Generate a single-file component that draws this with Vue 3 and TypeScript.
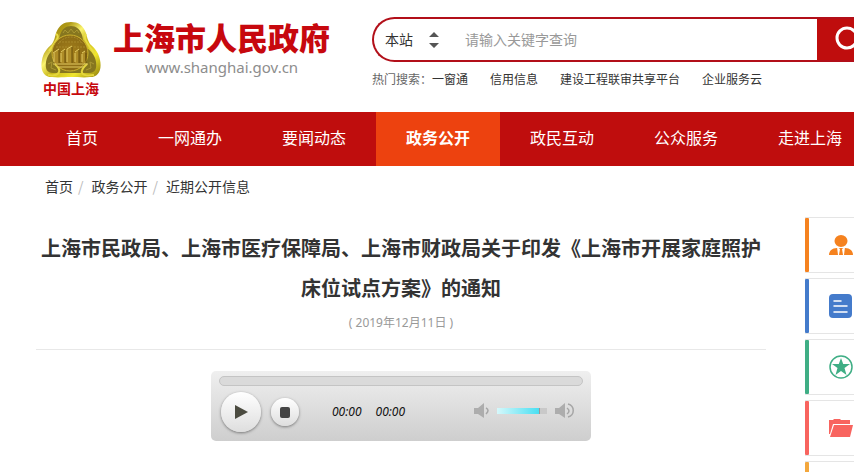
<script setup lang="ts">
import { ref } from 'vue'

interface NavItem {
  label: string
  active?: boolean
}

const scope = ref('本站')
const keyword = ref('')
const volume = ref(85)
const hotWords: string[] = ['一窗通', '信用信息', '建设工程联审共享平台', '企业服务云']
const navItems: NavItem[] = [
  { label: '首页' },
  { label: '一网通办' },
  { label: '要闻动态' },
  { label: '政务公开', active: true },
  { label: '政民互动' },
  { label: '公众服务' },
  { label: '走进上海' },
]
const crumbs: string[] = ['首页', '政务公开', '近期公开信息']
</script>

<template>
  <div class="page">
    <header class="header">
      <a class="brand" href="#">
        <span class="emblem">
          <svg width="60" height="56" viewBox="0 0 60 56" aria-hidden="true">
            <defs>
              <linearGradient id="gold" x1="0" y1="0" x2="1" y2="1">
                <stop offset="0" stop-color="#8a7610" />
                <stop offset="0.25" stop-color="#b09a16" />
                <stop offset="0.4" stop-color="#fbf470" />
                <stop offset="0.55" stop-color="#c9b71c" />
                <stop offset="0.75" stop-color="#f0e62e" />
                <stop offset="1" stop-color="#8c7a0a" />
              </linearGradient>
              <radialGradient id="disc">
                <stop offset="0" stop-color="#a5801c" />
                <stop offset="1" stop-color="#8a6a14" />
              </radialGradient>
            </defs>
            <path d="M15 11C18 3 23 0 30 0C37 0 42 3 45 11C46 15 47 19 49 22C55 27 58 32 59 38C61 47 58 55 49 55C43 56 37 55 30 55C23 55 17 56 11 55C2 55-1 47 1 38C2 32 5 27 11 22C13 19 14 15 15 11Z" fill="url(#gold)" />
            <path d="M19 13C21 7 25 4 30 4C35 4 39 7 41 13C42 18 43 22 46 26C51 30 54 34 55 40C56 47 54 51 48 51H12C6 51 4 47 5 40C6 34 9 30 14 26C17 22 18 18 19 13Z" fill="#86761f" />
            <path d="M22 11L24 8L27 11L30 7L33 11L36 8L38 11M7 42L11 40L10 46L15 48M53 42L49 40L50 46L45 48" fill="none" stroke="#aa9833" />
            <path d="M15 12C20 14 13 22 8 29M45 12C41 17 49 24 53 31" fill="none" stroke="#e9dc45" stroke-width="2" />
            <path d="M7 53C18 55 22 49 14 42M53 53C40 55 37 50 46 42" fill="none" stroke="#e4d63c" stroke-width="2" />
            <circle cx="29" cy="31" r="18" fill="url(#disc)" stroke="#cdb22f" />
            <path d="M17 22C21 17 25 15 30 15C35 15 39 18 42 22M15 25H44M18 20H40" fill="none" stroke="#a88a2a" stroke-dasharray="2 1" />
            <path d="M13 30L18 27V41H13ZM20 31L24 27V41H20ZM26 27L31 24V41H26ZM34 30L38 27V41H34ZM41 31L44 29V41H41Z" fill="#ae8c27" />
            <path d="M12 31L18 27M20 30L24 27M26 27L31 24M34 30L38 27M41 31L44 29M13 31V40M20 31V40M26 27V40M34 31V40M41 32V40M12 42H47M16 45H43" fill="none" stroke="#e2cb62" />
            <path d="M18 28V41M24 28V41M31 25V41M38 28V41M45 31V41" fill="none" stroke="#694e0a" />
          </svg>
          <span class="emblem-name">中国上海</span>
        </span>
        <span class="brand-text">
          <strong class="brand-title">上海市人民政府</strong>
          <span class="brand-url">www.shanghai.gov.cn</span>
        </span>
      </a>
      <div class="search-area">
        <form class="search" role="search" @submit.prevent>
          <div class="scope">
            <select v-model="scope" aria-label="搜索范围">
              <option>本站</option>
            </select>
            <svg width="10" height="18" viewBox="0 0 10 18" aria-hidden="true">
              <path d="M5 1L10 6H0ZM5 17L0 12H10Z" fill="#555" />
            </svg>
          </div>
          <input v-model="keyword" type="text" placeholder="请输入关键字查询" aria-label="关键字">
          <button type="submit" aria-label="搜索">
            <svg width="30" height="30" viewBox="0 0 30 30" aria-hidden="true">
              <circle cx="12" cy="13" r="10" fill="none" stroke="#fff" stroke-width="3" />
              <path d="M19 20L27 28" stroke="#fff" stroke-width="3" />
            </svg>
          </button>
        </form>
        <div class="hot">
          <span class="hot-label">热门搜索：</span>
          <a v-for="word in hotWords" :key="word" href="#">{{ word }}</a>
        </div>
      </div>
    </header>

    <nav class="nav">
      <a v-for="item in navItems" :key="item.label" href="#" :class="{ active: item.active }">{{ item.label }}</a>
    </nav>

    <div class="content">
      <main class="main">
        <ol class="crumbs">
          <li v-for="crumb in crumbs" :key="crumb"><a href="#">{{ crumb }}</a></li>
        </ol>
        <article>
          <h1>上海市民政局、上海市医疗保障局、上海市财政局关于印发《上海市开展家庭照护床位试点方案》的通知</h1>
          <p class="date">( 2019年12月11日 )</p>
          <div class="player">
            <div class="progress" role="progressbar" aria-label="播放进度" aria-valuenow="0"></div>
            <div class="controls">
              <button class="play" type="button" aria-label="播放">
                <svg width="14" height="14" viewBox="0 0 14 14" aria-hidden="true"><path d="M1 0L14 7L1 14Z" fill="#4b4b40" /></svg>
              </button>
              <button class="stop" type="button" aria-label="停止">
                <svg width="10" height="12" viewBox="0 0 10 12" aria-hidden="true"><rect width="10" height="11" y="1" rx="2" fill="#444" /></svg>
              </button>
              <div class="times"><span>00:00</span><span>00:00</span></div>
              <div class="volume">
                <svg width="20" height="18" viewBox="0 0 20 18" aria-hidden="true">
                  <path d="M1 6H5L11 1V16L5 12H1Z" fill="#adadad" />
                  <path d="M13 6Q17 8 13 12" fill="none" stroke="#a6a6a6" stroke-width="1.5" />
                </svg>
                <input v-model.number="volume" type="range" min="0" max="100" aria-label="音量">
                <svg width="20" height="18" viewBox="0 0 20 18" aria-hidden="true">
                  <path d="M0 6H4L10 1V16L4 12H0Z" fill="#adadad" />
                  <path d="M12 6Q16 9 12 12M13 2C20 4 20 13 13 15" fill="none" stroke="#a6a6a6" stroke-width="1.5" />
                </svg>
              </div>
            </div>
          </div>
        </article>
      </main>

      <aside class="side">
        <a class="tile orange" href="#" aria-label="个人">
          <svg width="24" height="24" viewBox="0 0 24 24" aria-hidden="true">
            <ellipse cx="12" cy="8" rx="6.500" ry="6" fill="currentColor" />
            <path d="M0 22C0 18 3 15 8 15H16C21 15 24 18 24 22Z" fill="currentColor" />
            <path d="M8 14L9 22H15L16 14L13 16H11Z" fill="#fff" />
            <path d="M11 16H13L14 22H10Z" fill="currentColor" />
          </svg>
        </a>
        <a class="tile blue" href="#" aria-label="文件">
          <svg width="24" height="24" viewBox="0 0 24 24" aria-hidden="true">
            <rect width="23" height="24" rx="4" fill="currentColor" />
            <path d="M5 7H12M5 12H18M5 18H18" stroke="#fff" stroke-width="1.500" stroke-linecap="round" />
          </svg>
        </a>
        <a class="tile green" href="#" aria-label="收藏">
          <svg width="24" height="24" viewBox="0 0 24 24" aria-hidden="true">
            <circle cx="12" cy="12" r="11" fill="none" stroke="currentColor" stroke-width="1.500" />
            <path d="M12 3L14.200 9H21L15.500 13L17.500 20L12 16L6.500 20L8.500 13L3 9H9.800Z" fill="currentColor" />
          </svg>
        </a>
        <a class="tile red" href="#" aria-label="文件夹">
          <svg width="24" height="24" viewBox="0 0 24 24" aria-hidden="true">
            <path d="M0 4H4L5 3H11L12 4H21V8H4L1 18H0Z" fill="currentColor" />
            <path d="M5 9H24L21 21H1Z" fill="currentColor" />
          </svg>
        </a>
        <a class="tile amber" href="#" aria-label="更多"></a>
      </aside>
    </div>
  </div>
</template>

<style>
body {
  margin: 0;
  overflow: hidden;
}
</style>

<style scoped>
.page {
  height: 100vh;
  overflow: hidden;
  background: #fff;
  color: #333;
  font-family: "Noto Sans CJK SC", "Noto Sans", sans-serif;
  font-size: 14px;
  text-spacing-trim: space-all;
}
.page * {
  box-sizing: border-box;
}
a {
  color: inherit;
  text-decoration: none;
}
button,
input,
select {
  margin: 0;
  padding: 0;
  border: 0;
  background: none;
  color: inherit;
  font: inherit;
  outline: 0;
}
svg {
  display: block;
  flex: none;
}
.header {
  display: flex;
  height: 112px;
  padding-left: 41px;
}
.brand {
  display: flex;
  flex: none;
  width: 331px;
  gap: 12px;
  color: #c7080e;
}
.emblem {
  display: flex;
  flex-direction: column;
  align-items: center;
  padding-top: 22px;
}
.emblem-name {
  font-size: 14px;
  font-weight: 700;
  line-height: 20px;
}
.brand-text {
  display: flex;
  flex-direction: column;
  align-items: center;
  padding-top: 18px;
}
.brand-title {
  font-size: 31px;
  font-weight: 900;
  line-height: 38px;
}
.brand-url {
  color: #8d8d8d;
  font-family: "Noto Sans", sans-serif;
  font-size: 15px;
  line-height: 22px;
}
.search-area {
  flex: 1;
  min-width: 0;
  padding-top: 17px;
}
.search {
  display: flex;
  height: 45px;
  overflow: hidden;
  border: 2px solid #b20f19;
  border-right: 0;
  border-radius: 23px 0 0 23px;
}
.scope {
  display: flex;
  align-items: center;
  width: 91px;
  padding-left: 11px;
  gap: 16px;
}
.scope select {
  width: 28px;
  appearance: none;
}
.search select,
.search input {
  padding-bottom: 2px;
}
.search input {
  flex: 1;
  min-width: 0;
}
.search input::placeholder {
  color: #999;
  opacity: 1;
}
.search button {
  display: flex;
  align-items: center;
  width: 37px;
  padding-left: 18px;
  overflow: hidden;
  background: #bf0d0d;
}
.hot {
  display: flex;
  gap: 22px;
  padding-top: 8px;
  font-size: 12px;
  line-height: 18px;
  white-space: nowrap;
}
.hot-label {
  margin-right: -22px;
  color: #666;
}
.nav {
  display: flex;
  height: 54px;
  padding-left: 36px;
  overflow: hidden;
  background: #bf0d0d;
  color: #fff;
  font-size: 16px;
  line-height: 50px;
}
.nav a {
  flex: none;
  padding: 0 30px;
}
.nav .active {
  background: #ed420f;
  font-weight: 700;
}
.content {
  display: flex;
  gap: 39px;
  padding-left: 36px;
}
.main {
  flex: 1;
  min-width: 0;
}
.crumbs {
  display: flex;
  margin: 0;
  padding: 9px 9px 0;
  line-height: 22px;
  list-style: none;
}
.crumbs li + li::before {
  padding: 0 8px 0 5px;
  color: #bbb;
  content: "/";
}
h1 {
  margin: 0;
  padding-top: 31px;
  font-size: 20px;
  font-weight: 700;
  line-height: 40px;
  text-align: center;
}
.date {
  margin: 0;
  padding: 5px 0 16px;
  border-bottom: 1px solid #e8e8e8;
  color: #999;
  font-family: "Noto Sans", "Noto Sans CJK SC", sans-serif;
  font-size: 12px;
  line-height: 20px;
  text-align: center;
}
.player {
  width: 380px;
  height: 70px;
  margin: 21px auto 0;
  padding: 5px 8px;
  border-radius: 5px;
  background: linear-gradient(#efefef, #cecece);
}
.progress {
  height: 10px;
  border: 1px solid #c4c4c4;
  border-radius: 5px;
  background: #dadada;
}
.controls {
  display: flex;
  align-items: center;
  height: 52px;
  padding: 0 8px 0 2px;
}
.controls button {
  display: flex;
  flex: none;
  align-items: center;
  justify-content: center;
  border-radius: 50%;
  background: linear-gradient(#fff, #dedede);
  box-shadow: 0 1px 3px #777;
}
.controls .play {
  width: 40px;
  height: 40px;
}
.controls .stop {
  width: 28px;
  height: 28px;
  margin-left: 10px;
}
.times {
  display: flex;
  gap: 14px;
  margin-left: 33px;
  padding-bottom: 2px;
  color: #111;
  font-family: "Noto Sans", sans-serif;
  font-size: 12px;
  font-style: italic;
}
.volume {
  display: flex;
  align-items: center;
  gap: 4px;
  margin-left: auto;
  padding-bottom: 2px;
}
.volume input {
  width: 50px;
  height: 6px;
  margin-right: 4px;
  appearance: none;
  background: linear-gradient(90deg, #d6f8fb, #49dff2 84%, #c9c9c9 84%);
}
.volume input::-webkit-slider-thumb {
  width: 1px;
  height: 6px;
  appearance: none;
  background: #999;
}
.side {
  display: flex;
  flex: none;
  flex-direction: column;
  width: 49px;
  padding-top: 51px;
  gap: 5px;
}
.tile {
  display: flex;
  flex: none;
  align-items: center;
  height: 56px;
  padding-left: 20px;
  overflow: hidden;
  border: solid #e5e5e5;
  border-width: 1px 0;
  position: relative;
}
.tile::before {
  position: absolute;
  inset: 0 auto 0 0;
  width: 4px;
  border-radius: 1px;
  background: currentColor;
  content: "";
}
.tile svg {
  margin-left: 4px;
}
.orange { color: #f5821f; }
.blue { color: #447bcb; }
.green { color: #3fae85; }
.red { color: #f8645f; }
.amber { color: #f3a73d; }
</style>
